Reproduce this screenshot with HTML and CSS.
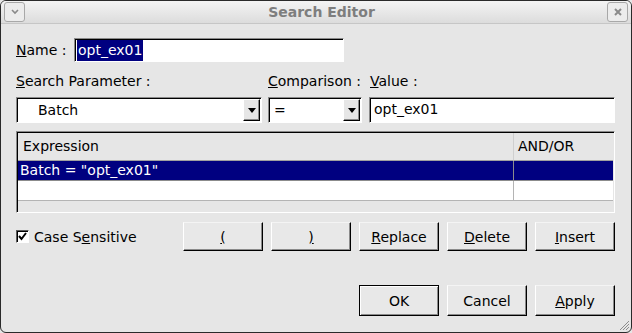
FILE: index.html
```html
<!DOCTYPE html>
<html lang="en">
<head>
    <meta charset="UTF-8">
    <link rel="stylesheet" href="styles.css">
    <title>Search Editor</title>
</head>
<body>
<div class="window">
    <div class="titlebar">
        <span class="tb-btn">
            <svg width="10" height="8" viewBox="0 0 10 8"><polyline points="2,2 5,5 8,2" fill="none" stroke="#8a8a8a" stroke-width="1.6"/></svg>
        </span>
        <span class="title">Search Editor</span>
        <span class="tb-btn">
            <svg width="10" height="10" viewBox="0 0 10 10"><path d="M2,2 L8,8 M8,2 L2,8" stroke="#8a8a8a" stroke-width="2"/></svg>
        </span>
    </div>

    <div class="content">
        <div class="name-row">
            <label class="name-label"><u>N</u>ame :</label>
            <div class="field name-field"><span class="sel">opt_ex01</span></div>
        </div>

        <div class="param-grid">
            <label><u>S</u>earch Parameter :</label>
            <label><u>C</u>omparison :</label>
            <label><u>V</u>alue :</label>

            <div class="combo">
                <span class="combo-text batch">Batch</span>
                <span class="combo-arrow"><i class="tri"></i></span>
            </div>
            <div class="combo">
                <span class="combo-text">=</span>
                <span class="combo-arrow"><i class="tri"></i></span>
            </div>
            <div class="field value-field">opt_ex01</div>
        </div>

        <div class="table">
            <div class="tr head">
                <div class="td expr">Expression</div>
                <div class="td andor">AND/OR</div>
            </div>
            <div class="tr selected">
                <div class="td expr">Batch = "opt_ex01"</div>
                <div class="td andor"></div>
            </div>
            <div class="tr">
                <div class="td expr"></div>
                <div class="td andor"></div>
            </div>
        </div>

        <div class="actions">
            <label class="check">
                <span class="box">
                    <svg width="9" height="9" viewBox="0 0 9 9"><polyline points="1,4 3.5,7 8,1" fill="none" stroke="#000" stroke-width="2"/></svg>
                </span>
                <span>Case S<u>e</u>nsitive</span>
            </label>
            <div class="btns">
                <button class="btn"><u>(</u></button>
                <button class="btn"><u>)</u></button>
                <button class="btn"><u>R</u>eplace</button>
                <button class="btn"><u>D</u>elete</button>
                <button class="btn"><u>I</u>nsert</button>
            </div>
        </div>

        <div class="footer">
            <button class="btn big default">OK</button>
            <button class="btn big">Cancel</button>
            <button class="btn big"><u>A</u>pply</button>
        </div>
    </div>

    <svg class="grip" width="12" height="12" viewBox="0 0 12 12">
        <path d="M11,2 L2,11 M11,5 L5,11 M11,8 L8,11" stroke="#8c8c8c" stroke-width="1"/>
    </svg>
</div>
</body>
</html>
```

FILE: styles.css
```css
body {
    margin: 0;
    font-family: "DejaVu Sans", Verdana, sans-serif;
    font-size: 14px;
    color: #000;
    background: #e6e6e6;
}

.window {
    position: relative;
    width: 632px;
    height: 333px;
    box-sizing: border-box;
    border: 1px solid #2a2a2a;
    border-radius: 6px;
    background: #e6e6e6;
    overflow: hidden;
}

.titlebar {
    display: flex;
    align-items: center;
    height: 22px;
    padding: 0 3px;
    background: linear-gradient(#f4f4f4, #dcdcdc);
    border-bottom: 1px solid #c6c6c6;
}

.tb-btn {
    display: flex;
    align-items: center;
    justify-content: center;
    width: 19px;
    height: 18px;
    border: 1px solid #a8a8a8;
    border-radius: 3px;
    background: #ececec;
}

.title {
    flex: 1;
    text-align: center;
    padding-left: 11px;
    font-weight: bold;
    font-size: 14px;
    color: #7e7e7e;
}

.content {
    padding: 14px 16px 0 15px;
}

/* sunken entry look */
.field,
.combo,
.table {
    box-sizing: border-box;
    background: #fff;
    border: 1px solid;
    border-color: #8a8a8a #fff #fff #8a8a8a;
    box-shadow: inset 1px 1px #000;
}

.name-row {
    display: flex;
    align-items: center;
    height: 24px;
}

.name-label {
    width: 58px;
}

.name-field {
    width: 270px;
    height: 24px;
    padding: 1px 0 0 2px;
}

.sel {
    display: inline-block;
    height: 21px;
    line-height: 21px;
    padding: 0 1px;
    background: #000080;
    color: #fff;
}

.param-grid {
    display: grid;
    grid-template-columns: 246px 94px 247px;
    grid-template-rows: 16px 26px;
    column-gap: 6px;
    row-gap: 8px;
    margin-top: 11px;
}

.param-grid label {
    line-height: 16px;
    white-space: nowrap;
}

.param-grid label:nth-child(3) {
    padding-left: 2px;
}

.combo {
    display: flex;
    height: 26px;
    padding: 1px 1px 1px 0;
}

.combo-text {
    flex: 1;
    line-height: 23px;
    padding-left: 5px;
}

.combo-text.batch {
    padding-left: 21px;
}

.combo-arrow {
    display: flex;
    align-items: center;
    justify-content: center;
    width: 15px;
    background: #e6e6e6;
    border: 1px solid;
    border-color: #fff #000 #000 #fff;
    box-shadow: inset -1px -1px #8a8a8a;
}

.tri {
    width: 0;
    height: 0;
    border-left: 4px solid transparent;
    border-right: 4px solid transparent;
    border-top: 5px solid #000;
}

.value-field {
    height: 26px;
    line-height: 23px;
    padding-left: 4px;
    margin-left: 1px;
}

.table {
    height: 82px;
    margin-top: 8px;
    padding: 1px 1px 0 1px;
    background: #e6e6e6;
}

.tr {
    display: flex;
    height: 20px;
    background: #fff;
}

.td {
    box-sizing: border-box;
    border-right: 1px solid #b4b4b4;
    border-bottom: 1px solid #b4b4b4;
    line-height: 19px;
    padding-left: 2px;
    white-space: nowrap;
}

.td.expr {
    width: 496px;
}

.td.andor {
    flex: 1;
    border-right: none;
}

.tr.head {
    height: 28px;
    background: #e6e6e6;
}

.tr.head .td {
    line-height: 27px;
    padding-left: 5px;
    border-color: #cfcfcf;
    border-bottom-color: #a0a0a0;
}

.tr.head .td.andor {
    padding-left: 4px;
}

.tr.selected {
    background: #000080;
    color: #fff;
}

.tr.selected .td {
    border-color: #8c8c8c;
}

.actions {
    display: flex;
    align-items: center;
    justify-content: space-between;
    margin-top: 9px;
}

.check {
    display: flex;
    align-items: center;
    gap: 5px;
}

.box {
    display: flex;
    align-items: center;
    justify-content: center;
    width: 13px;
    height: 13px;
    box-sizing: border-box;
    background: #fff;
    border: 1px solid;
    border-color: #5a5a5a #fff #fff #5a5a5a;
    box-shadow: inset 1px 1px #000;
}

.btns,
.footer {
    display: flex;
    gap: 8px;
}

.footer {
    justify-content: flex-end;
    margin-top: 34px;
}

.btn {
    width: 80px;
    height: 29px;
    padding: 0;
    font-family: inherit;
    font-size: 14px;
    color: #000;
    background: #e8e8e8;
    border: 1px solid;
    border-color: #f4f4f4 #000 #000 #fff;
    box-shadow: inset -1px -1px #8a8a8a;
}

.btn.big {
    height: 31px;
}

.btn.default {
    border-color: #000;
    box-shadow: inset 1px 1px #fff, inset -1px -1px #8a8a8a;
}

.grip {
    position: absolute;
    right: 1px;
    bottom: 1px;
}
```
